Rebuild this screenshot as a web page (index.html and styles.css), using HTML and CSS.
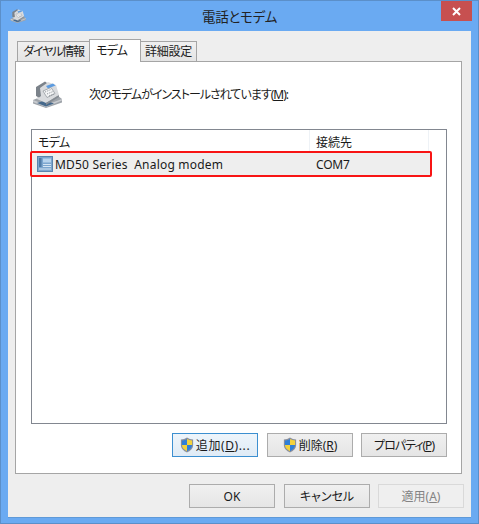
FILE: index.html
```html
<!DOCTYPE html>
<html lang="ja">

<head>
    <meta charset="UTF-8">
    <meta name="viewport" content="width=device-width, initial-scale=1.0">
    <title>電話とモデム</title>
    <link rel="stylesheet" href="styles.css">
</head>

<body>
    <svg class="defs" width="0" height="0">
        <defs>
            <symbol id="shield" viewBox="0 0 16 18">
                <path d="M8 .5C6 2 3.500 2.700 1 2.800V9c0 4 3 6.800 7 8.500 4-1.700 7-4.500 7-8.500V2.800C12.500 2.700 10 2 8 .5z" fill="#8a8f9c"/>
                <path d="M8 2v7H2.200V3.900C4.400 3.700 6.300 3.100 8 2z" fill="#2f7fd8"/>
                <path d="M8 2c1.700 1.100 3.600 1.700 5.800 1.900V9H8z" fill="#f3d23c"/>
                <path d="M2.200 9H8v7C4.800 14.500 2.400 12.300 2.200 9z" fill="#f3d23c"/>
                <path d="M8 9h5.800c-.2 3.300-2.600 5.500-5.800 7z" fill="#2f7fd8"/>
            </symbol>
            <symbol id="phone" viewBox="0 0 30 27">
                <path d="M1 19 21 11l9 7v3.500L14 27 1 22.500z" fill="#9fa4aa"/>
                <path d="M1 19l13 5 16-6v1.500L14 26 1 21z" fill="#c9ccd0"/>
                <path d="M5 22l9 3.500 8-3-9-3z" fill="#46698c"/>
                <path d="M6 7 16 1l8 3 3 10-13 8-9-4z" fill="#d9dbde"/>
                <path d="M14 22l13-8v2L14 24z" fill="#868c93"/>
                <path d="M14 5l7-2.500 2.500 2-7.500 3z" fill="#5c9be0"/>
                <path d="M11 10l8-3.500 4 6-8 4z" fill="#f3f4f5" stroke="#8b9097" stroke-width=".7"/>
                <path d="M13 11l6-2.500M15 13l6-2.500M17 15l5-2" stroke="#6f757c" stroke-width=".8" stroke-dasharray="1 1"/>
                <path d="M4 6l9-5.500 2 1.500-7 5 1 8-2 1.500L4 15z" fill="#7b828a"/>
            </symbol>
            <symbol id="modem" viewBox="0 0 16 16">
                <rect x=".5" y=".5" width="15" height="15" fill="#7ca6cf" stroke="#5b85ad"/>
                <rect x="6" y="2.500" width="8" height="4" fill="#b7d4ee"/>
                <rect x="2" y="2" width="2.500" height="9" fill="#4f7ba6"/>
                <path d="M6 8h8v1H6zM6 10h8v1H6zM2 12.500h12v1H2z" fill="#d5e5f3"/>
            </symbol>
        </defs>
    </svg>

    <div class="window">
        <div class="titlebar">
            <svg class="title_icon" width="16" height="14"><use href="#phone"></use></svg>
            <span class="title_text">電話とモデム</span>
            <span class="close">
                <svg width="9" height="9" viewBox="0 0 9 9">
                    <path d="M1 1l7 7M8 1 1 8" stroke="#fff" stroke-width="2"/>
                </svg>
            </span>
        </div>

        <div class="dialog">
            <ul class="tabs">
                <li class="tab tab_dial">ダイヤル情報</li>
                <li class="tab tab_modem current">モデム</li>
                <li class="tab tab_more">詳細設定</li>
            </ul>

            <div class="panel">
                <div class="intro">
                    <svg class="intro_icon" width="30" height="27"><use href="#phone"></use></svg>
                    <span class="intro_text">次のモデムがインストールされています(<u>M</u>):</span>
                </div>

                <div class="list">
                    <div class="list_head">
                        <span class="col_name">モデム</span>
                        <span class="col_port">接続先</span>
                        <span class="col_rest"></span>
                    </div>
                    <div class="list_row">
                        <span class="col_name row_name">
                            <svg width="16" height="16"><use href="#modem"></use></svg>
                            <span class="latin">MD50 Series&nbsp; Analog modem</span>
                        </span>
                        <span class="col_port latin port_value">COM7</span>
                        <span class="marker"></span>
                    </div>
                </div>

                <div class="list_buttons">
                    <button class="btn focus wide"><svg width="14" height="16"><use href="#shield"></use></svg>追加(<u>D</u>)...</button>
                    <button class="btn"><svg width="14" height="16"><use href="#shield"></use></svg>削除(<u>R</u>)</button>
                    <button class="btn tight">プロパティ(<u>P</u>)</button>
                </div>
            </div>

            <div class="dialog_buttons">
                <button class="btn">OK</button>
                <button class="btn">キャンセル</button>
                <button class="btn disabled">適用(<u>A</u>)</button>
            </div>
        </div>
    </div>
</body>

</html>
```

FILE: styles.css
```css
* {
    margin: 0px;
    padding: 0px;
    box-sizing: border-box;
}

ul {
    list-style: none;
}

body {
    width: 479px;
    height: 524px;
    overflow: hidden;
    background-color: #6aaaf2;
    font-family: "Noto Sans", "Noto Sans CJK JP", sans-serif;
    font-size: 12px;
    font-feature-settings: "palt";
    color: #1a1a1a;
}

.defs {
    position: absolute;
}

.window {
    display: flex;
    flex-direction: column;
    width: 479px;
    height: 524px;
    padding: 0 7px 6px 7px;
    border: 1px solid #5b8fc9;
}

.titlebar {
    display: flex;
    justify-content: center;
    align-items: center;
    position: relative;
    height: 30px;
    flex: none;
}

.title_icon {
    position: absolute;
    left: 2px;
    top: 8px;
}

.title_text {
    font-size: 13.500px;
    letter-spacing: -0.3px;
    color: #222;
}

.close {
    display: flex;
    justify-content: center;
    align-items: center;
    position: absolute;
    top: 0;
    right: -1px;
    width: 31px;
    height: 20px;
    background-color: #c75050;
}

.dialog {
    flex: 1;
    display: flex;
    flex-direction: column;
    padding: 8px 9px 9px 7px;
    background-color: #eeeeee;
    border: 0 solid #5f9ad8;
    border-width: 0 0 1px 0;
}

.tabs {
    display: flex;
    align-items: flex-end;
    height: 22px;
    padding-left: 2px;
    position: relative;
    z-index: 1;
}

.tab {
    height: 20px;
    line-height: 20px;
    text-align: center;
    background-color: #ececec;
    background-image: linear-gradient(#f0f0f0, #e4e4e4);
    border: 1px solid #a5a5a5;
    border-bottom: 0;
}

.tab_dial {
    width: 72px;
    border-right: 0;
    letter-spacing: -1.2px;
}

.tab_modem {
    width: 52px;
}

.tab_more {
    width: 56px;
    border-left: 0;
    letter-spacing: -0.3px;
}

.tab.current {
    height: 23px;
    margin-bottom: -1px;
    background: #fff;
    line-height: 22px;
    padding-right: 7px;
    letter-spacing: -1px;
}

.panel {
    flex: none;
    height: 413px;
    padding: 15px 14px 0 15px;
    background-color: #fff;
    border: 1px solid #a5a5a5;
}

.intro {
    display: flex;
    align-items: center;
    height: 34px;
    margin-bottom: 18px;
}

.intro_icon {
    flex: none;
    margin-left: 1px;
}

.intro_text {
    margin-left: 27px;
    letter-spacing: -1px;
}

.list {
    height: 295px;
    border: 1px solid #828790;
}

.list_head {
    display: grid;
    grid-template-columns: 278px 119px 1fr;
    height: 21px;
    line-height: 26px;
}

.list_row {
    display: grid;
    grid-template-columns: 278px 1fr;
    width: 398px;
    position: relative;
    height: 24px;
    align-items: center;
    background-color: #eeeeee;
    margin-top: 1px;
}

.col_name {
    padding-left: 6px;
}

.list_head .col_name {
    letter-spacing: -0.7px;
}

.list_head .col_name,
.list_head .col_port {
    border-right: 1px solid #eef2f6;
}

.col_port {
    padding-left: 6px;
}

.row_name {
    display: flex;
    align-items: center;
    padding-left: 5px;
    gap: 2px;
}

.latin {
    font-size: 12px;
    letter-spacing: 0.2px;
    padding-top: 1px;
}

.port_value {
    letter-spacing: -0.2px;
}

/* red box drawn over the row */
.marker {
    position: absolute;
    left: -2px;
    top: -1px;
    width: 402px;
    height: 26px;
    border: 2px solid #f81414;
    border-radius: 2px;
}

.list_buttons {
    display: flex;
    justify-content: flex-end;
    gap: 8px;
    margin-top: 9px;
}

.list_buttons .btn:first-child {
    margin-right: 1px;
}

.btn {
    display: flex;
    justify-content: center;
    align-items: center;
    width: 86px;
    height: 24px;
    font-family: inherit;
    font-size: 12px;
    font-feature-settings: inherit;
    color: #1a1a1a;
    background-image: linear-gradient(#f0f0f0, #e5e5e5);
    border: 1px solid #acacac;
}

.btn.wide {
    letter-spacing: 0.6px;
}

.btn.tight {
    letter-spacing: -1px;
}

.btn svg {
    margin-right: 2px;
}

.btn.focus {
    border-color: #3c8fd0;
    background-image: linear-gradient(#eef5fb, #dfebf6);
}

.btn.disabled {
    color: #838383;
    background: #efefef;
    border-color: #d9d9d9;
}

.dialog_buttons {
    display: flex;
    justify-content: flex-end;
    gap: 8px;
    margin: 10px -2px 0 0;
}

.dialog_buttons .btn:first-child {
    margin-right: 1px;
}
```
